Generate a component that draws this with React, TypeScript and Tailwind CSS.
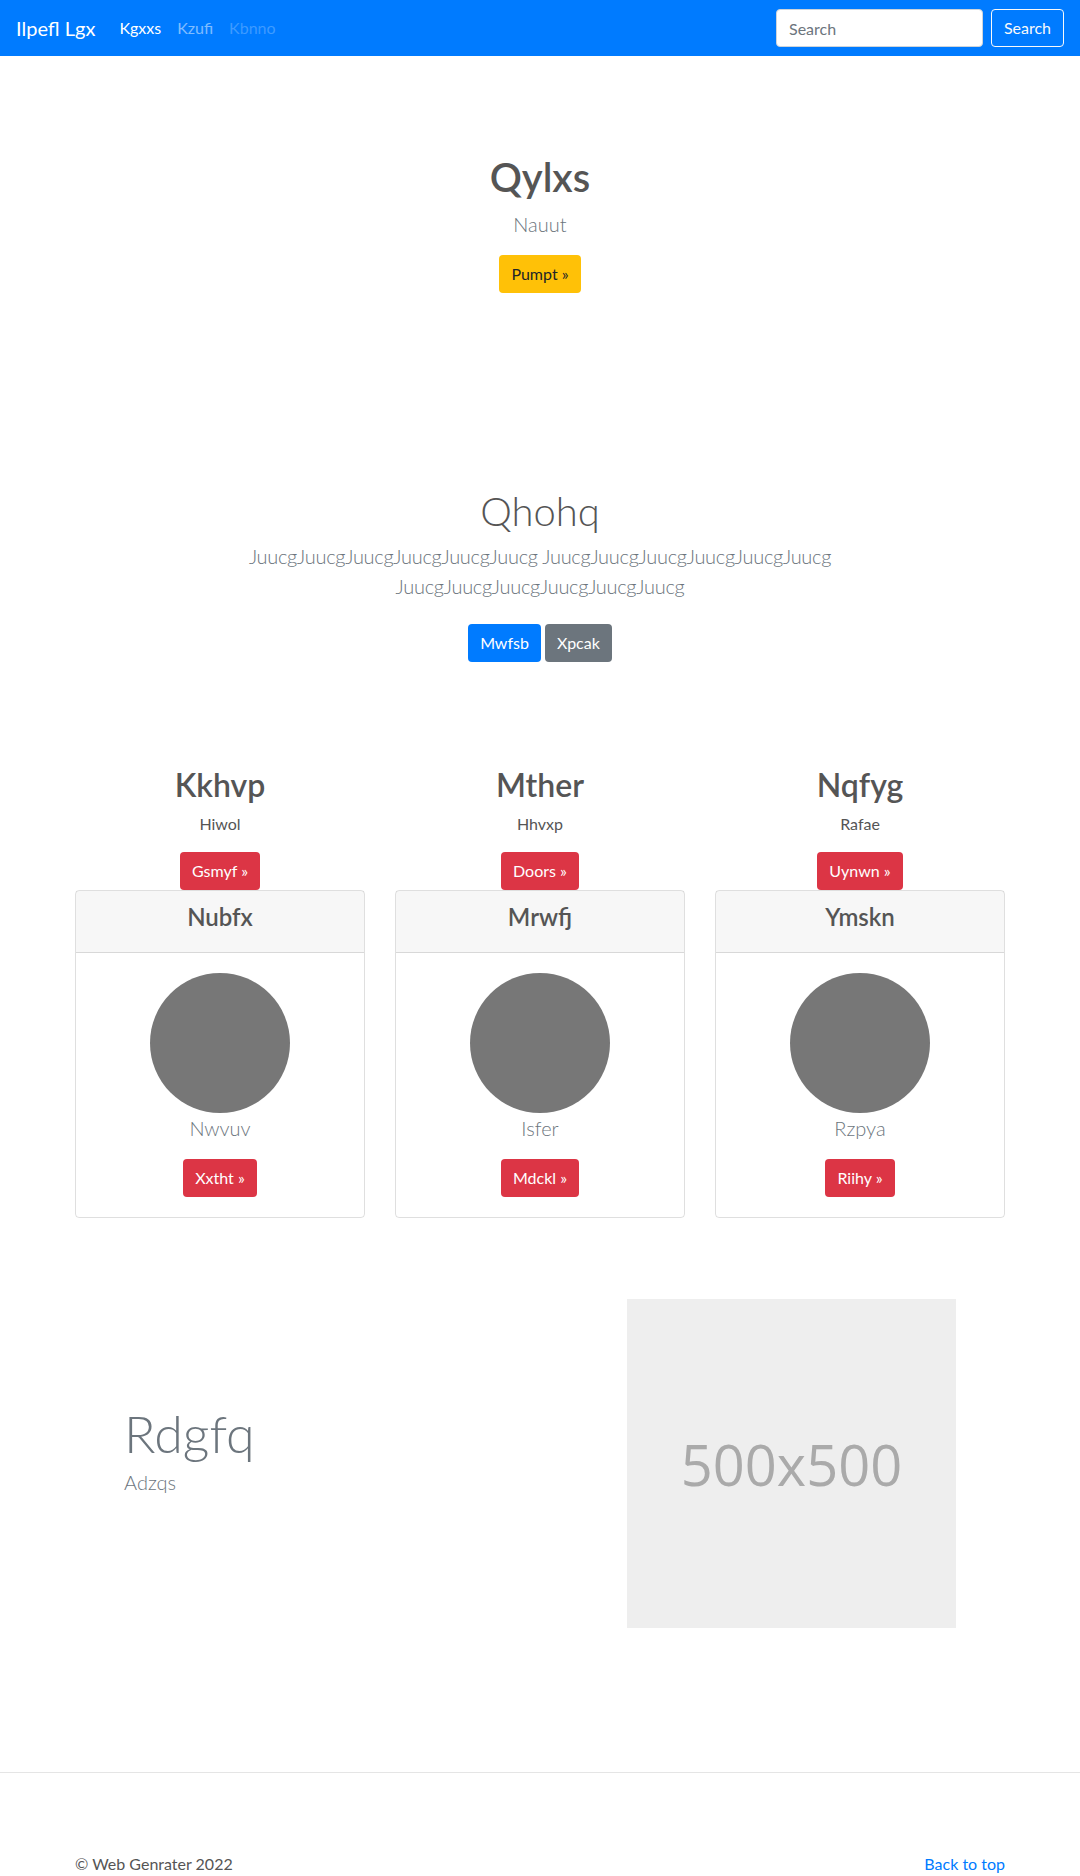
import React from "react";

const cols = [
  { title: "Kkhvp", text: "Hiwol", btn: "Gsmyf", card: "Nubfx", name: "Nwvuv", cta: "Xxtht" },
  { title: "Mther", text: "Hhvxp", btn: "Doors", card: "Mrwfj", name: "Isfer", cta: "Mdckl" },
  { title: "Nqfyg", text: "Rafae", btn: "Uynwn", card: "Ymskn", name: "Rzpya", cta: "Riihy" },
];

const btn = "inline-block h-[38px] px-3 rounded-[4px] text-[16px] leading-[38px]";

export default function App() {
  return (
    <div className="min-h-screen bg-white font-['Lato','Noto_Sans',sans-serif] text-[#555]">
      {/* Navbar */}
      <nav className="flex h-14 items-center bg-[#007bff] px-4">
        <a className="mr-4 text-[20px] text-white">Ilpefl Lgx</a>
        <ul className="flex text-[16px]">
          <li className="px-2 text-white">Kgxxs</li>
          <li className="px-2 text-white/50">Kzufi</li>
          <li className="px-2 text-white/25">Kbnno</li>
        </ul>
        <form className="ml-auto flex gap-2">
          <input
            placeholder="Search"
            className="h-[38px] w-[207px] rounded-[4px] border border-[#ced4da] bg-white px-3 text-[16px] text-[#495057] placeholder:text-[#6c757d] outline-none"
          />
          <button
            type="button"
            className="h-[38px] w-[73px] rounded-[4px] border border-[#f8f9fa] text-[16px] text-[#f8f9fa]"
          >
            Search
          </button>
        </form>
      </nav>

      {/* Hero */}
      <section className="pt-[97px] text-center">
        <h1 className="mb-2 text-[40px] font-semibold leading-[1.2]">Qylxs</h1>
        <p className="mb-4 text-[20px] font-light leading-[30px] text-[#6c757d]">Nauut</p>
        <a className={`${btn} bg-[#ffc107] text-[#212529]`}>Pumpt »</a>
      </section>

      {/* Intro */}
      <section className="mt-[194px] text-center">
        <h1 className="mb-[6px] text-[40px] font-light leading-[1.2]">Qhohq</h1>
        <p className="mx-auto mb-[23px] max-w-[640px] text-[20px] font-light leading-[30px] tracking-[-0.3px] text-[#6c757d]">
          JuucgJuucgJuucgJuucgJuucgJuucg JuucgJuucgJuucgJuucgJuucgJuucg
          <br />
          JuucgJuucgJuucgJuucgJuucgJuucg
        </p>
        <div className="flex justify-center gap-1">
          <a className={`${btn} bg-[#007bff] text-white`}>Mwfsb</a>
          <a className={`${btn} bg-[#6c757d] text-white`}>Xpcak</a>
        </div>
      </section>

      {/* Columns with cards */}
      <section className="mx-auto mt-[104px] grid w-[960px] grid-cols-3">
        {cols.map((c) => (
          <div key={c.title} className="px-[15px] text-center">
            <h2 className="mb-2 text-[32px] font-semibold leading-[1.2]">{c.title}</h2>
            <p className="mb-4 text-[16px] leading-6">{c.text}</p>
            <a className={`${btn} bg-[#dc3545] text-white`}>{c.btn} »</a>
            <div className="rounded-[4px] border border-black/[0.125]">
              <div className="border-b border-black/[0.125] bg-black/[0.03] px-5 py-3">
                <h4 className="mb-2 text-[24px] font-semibold leading-[1.2]">{c.card}</h4>
              </div>
              <div className="p-5">
                <div className="mx-auto h-[140px] w-[140px] rounded-full bg-[#777]" />
                <p className="mb-4 text-[20px] font-light leading-[30px] text-[#6c757d]">{c.name}</p>
                <a className={`${btn} bg-[#dc3545] text-white`}>{c.cta} »</a>
              </div>
            </div>
          </div>
        ))}
      </section>

      {/* Feature */}
      <section className="mx-auto mt-[81px] flex w-[960px] items-center">
        <div className="w-[567px] pb-[28px] pl-[64px] text-[#6c757d]">
          <h2 className="mb-[2px] text-[52px] font-light leading-[1.2]">Rdgfq</h2>
          <p className="text-[20px] font-light leading-[30px]">Adzqs</p>
        </div>
        <div className="flex h-[329px] w-[329px] items-center justify-center bg-[#eee]">
          <span className="font-['Open_Sans',sans-serif] text-[56px] text-[#aaa]">500x500</span>
        </div>
      </section>

      {/* Footer */}
      <footer className="mt-[144px] border-t border-[#e5e5e5] pt-[79px]">
        <div className="mx-auto flex w-[960px] justify-between px-[15px] text-[16px] leading-6">
          <p className="text-[#555]">© Web Genrater 2022</p>
          <a className="text-[#007bff]">Back to top</a>
        </div>
      </footer>
    </div>
  );
}
